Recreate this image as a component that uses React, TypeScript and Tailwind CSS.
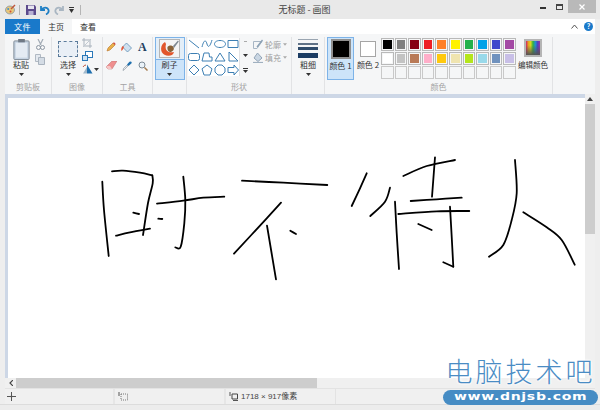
import React from "react";

const CJK = "font-['Noto_Sans_CJK_SC','Noto_Sans',sans-serif]";

const ROW_1 = ["#000000", "#7f7f7f", "#880015", "#ed1c24", "#ff7f27", "#fff200", "#22b14c", "#00a2e8", "#3f48cc", "#a349a4"];
const ROW_2 = ["#ffffff", "#c3c3c3", "#b97a57", "#ffaec9", "#ffc90e", "#efe4b0", "#b5e61d", "#99d9ea", "#7092be", "#c8bfe7"];

// hand drawn strokes on the canvas, in page coordinates
const STROKES: number[][][] = [
  [[102.3, 181.7], [104, 210], [108.7, 256]],
  [[112, 171.3], [123, 170.7], [140, 172.7], [152.3, 175.3]],
  [[152.3, 175.3], [152.7, 183.3], [148, 203], [143, 235]],
  [[116, 235.7], [130, 232.3], [150, 228.7]],
  [[133.3, 212.7], [139, 214]],
  [[158.3, 218.7], [162.3, 219]],
  [[157, 203.7], [183.3, 200.7], [203.3, 197.7], [224.3, 196.7]],
  [[183.3, 176.7], [185.3, 200], [184.3, 223.3], [180.7, 246.7], [175.3, 247.3]],
  [[242, 180.7], [283.3, 182.7], [327.3, 185]],
  [[281, 202.7], [266.7, 218.3], [234, 253.7]],
  [[267, 225.7], [276, 279.3]],
  [[290.3, 230.7], [296, 234]],
  [[366.7, 173.3], [360, 188.3], [351.7, 206]],
  [[390, 187.7], [385, 201.7], [370.3, 216]],
  [[395, 201.7], [396.7, 233.3], [399, 269]],
  [[398.3, 214], [436.7, 211.3], [469.3, 211]],
  [[450, 206.7], [451.7, 236.7], [453.3, 266.7]],
  [[453.3, 266.7], [443.3, 262.3]],
  [[418.3, 224], [431.7, 230]],
  [[410.7, 201], [436.7, 199.3], [461.7, 197.7]],
  [[435, 157.3], [432, 196.7]],
  [[403.3, 176], [426.7, 166], [455, 160]],
  [[515, 160], [516.7, 193.3], [511.7, 220], [503.3, 245], [489, 256.7]],
  [[523.3, 212.3], [546.7, 227.3], [561.7, 240], [574.7, 264.7]],
];

// catmull-rom through the sampled points, so the pen lines stay round
const smooth = (pts: number[][]) => {
  let d = `M${pts[0][0]} ${pts[0][1]}`;
  for (let i = 0; i < pts.length - 1; i++) {
    const p0 = pts[Math.max(i - 1, 0)];
    const p1 = pts[i];
    const p2 = pts[i + 1];
    const p3 = pts[Math.min(i + 2, pts.length - 1)];
    const c1x = p1[0] + (p2[0] - p0[0]) / 6;
    const c1y = p1[1] + (p2[1] - p0[1]) / 6;
    const c2x = p2[0] - (p3[0] - p1[0]) / 6;
    const c2y = p2[1] - (p3[1] - p1[1]) / 6;
    d += ` C${c1x} ${c1y} ${c2x} ${c2y} ${p2[0]} ${p2[1]}`;
  }
  return d;
};

const Arrow = () => (
  <svg width="5" height="3" viewBox="0 0 5 3" className="block">
    <path d="M0 0h5L2.5 3z" fill="#333" />
  </svg>
);

const Group = ({ label, width, children }: { label: string; width: string; children: React.ReactNode }) => (
  <div className={`${width} flex h-full flex-col border-r border-[#e2e3e5]`}>
    <div className="flex h-[44px] flex-1 items-start">{children}</div>
    <div className="mb-[1px] h-[12px] text-center text-[8px] leading-[12px] text-[#a3a3a3]">{label}</div>
  </div>
);

const Shape = ({ d }: { d: string }) => (
  <svg width="12" height="12" viewBox="0 0 12 12">
    <path d={d} fill="none" stroke="#3d7fb3" strokeWidth="1" />
  </svg>
);

const SHAPES = [
  "M1 2 L11 10",
  "M1 9 C3 1 5 2 6 6 S9 9 11 2",
  "M6 2.5 C2 2.5 .5 4.5 .5 6 S2 9.5 6 9.5 S11.5 7.500 11.5 6 S10 2.5 6 2.5z",
  "M1 2.500h10v7H1z",
  "M2.500 2.500h7q2 0 2 2v3q0 2-2 2h-7q-2 0-2-2v-3q0-2 2-2z",
  "M1 10 L3 2 H8 L8.500 6 H11 V10z",
  "M6 2 L11 10 H1z",
  "M2 1 L11 10 H2z",
  "M6 1 L11 6 L6 11 L1 6z",
  "M6 1 L11 4.800 L9 11 H3 L1 4.800z",
  "M4 1 H8 L11 4 V8 L8 11 H4 L1 8 V4z",
  "M1 3.500 H7 V1 L11.500 6 L7 11 V8.500 H1z",
];

export default function App() {
  return (
    <div className={`${CJK} relative flex h-[410px] w-[600px] flex-col overflow-hidden bg-[#eeeeee] text-[#333]`}>
      {/* title bar */}
      <div className="flex h-[19px] items-start bg-[#e9e9e9] pl-[5px]">
        <div className="flex h-[19px] w-[80px] items-center">
          <svg width="11" height="11" viewBox="0 0 11 11">
            <ellipse cx="5" cy="6" rx="4.500" ry="4" fill="#e8c77a" stroke="#7a8a9c" strokeWidth=".7" />
            <circle cx="3.200" cy="5" r="1" fill="#3c8fd0" />
            <circle cx="5.500" cy="7.500" r="1" fill="#d24a3a" />
            <path d="M6 5 L10 1" stroke="#c0563c" strokeWidth="1.500" />
          </svg>
          <div className="ml-[3px] h-[10px] w-px bg-[#b5b5b5]" />
          <svg className="ml-[6px]" width="10" height="10" viewBox="0 0 10 10">
            <path d="M0 0h8.500L10 1.500V10H0z" fill="#5c4a8c" />
            <path d="M2 .5h6v3.500H2z" fill="#e6e4ef" />
            <path d="M2.500 6h5v4h-5z" fill="#b9b2d4" />
          </svg>
          <svg className="ml-[4px]" width="10" height="10" viewBox="0 0 10 10">
            <path d="M1 1v4h4M1.500 4.800C3 2 7.500 2 8.500 5c.6 2-.5 3.500-2.500 4.500" fill="none" stroke="#1f7fc4" strokeWidth="1.800" />
          </svg>
          <svg className="ml-[4px]" width="10" height="10" viewBox="0 0 10 10">
            <path d="M9 1v4H5M8.500 4.800C7 2 2.500 2 1.500 5c-.6 2 .5 3.500 2.500 4.500" fill="none" stroke="#a9b6c2" strokeWidth="1.800" />
          </svg>
          <svg className="ml-[5px]" width="5" height="6" viewBox="0 0 5 6">
            <path d="M0 0h5v1H0zM0 2h5L2.500 6z" fill="#333" />
          </svg>
          <div className="ml-[6px] h-[10px] w-px bg-[#b5b5b5]" />
        </div>
        <div className="flex-1 pr-[16px] pt-[1px] text-center text-[9px] leading-[18px] text-[#444]">无标题 - 画图</div>
        <div className="mr-[4px] flex h-[13px] items-center">
          <div className="mr-[10px] mt-[2px] h-[2px] w-[6px] bg-[#333]" />
          <div className="mr-[5px] h-[6px] w-[7px] border border-t-2 border-[#444]" />
          <div className="flex h-[13px] w-[28px] items-center justify-center bg-[#b9b9b9]">
            <svg width="6" height="6" viewBox="0 0 6 6">
              <path d="M.5 .5l5 5M5.500 .5l-5 5" stroke="#fff" strokeWidth="1.200" />
            </svg>
          </div>
        </div>
      </div>

      {/* tabs */}
      <div className="mx-[5px] flex h-[15px] items-stretch bg-white text-[8px] leading-[15px]">
        <div className="w-[35px] bg-[#1979ca] text-center tracking-[.5px] text-white">文件</div>
        <div className="w-[32px] bg-[#f5f6f7] text-center">主页</div>
        <div className="w-[32px] text-center">查看</div>
        <div className="flex flex-1 items-center justify-end pr-[2px]">
          <svg width="7" height="5" viewBox="0 0 7 5" className="mr-[6px]">
            <path d="M.5 4.500L3.500 1l3 3.500" fill="none" stroke="#555" />
          </svg>
          <div className="flex h-[9px] w-[9px] items-center justify-center rounded-full bg-[#1979ca] text-[7px] font-bold leading-none text-white">?</div>
        </div>
      </div>

      {/* ribbon */}
      <div className="mx-[5px] flex h-[60px] items-stretch bg-[#f5f6f7] pt-[3px]">
        <Group label="剪贴板" width="w-[47px]">
          <div className="ml-[6px] flex w-[20px] flex-col items-center">
            <svg width="17" height="21" viewBox="0 0 17 22" className="mt-[2px]">
              <rect x=".5" y="2" width="16" height="19.500" rx="1" fill="#c6d3e2" stroke="#7f8a96" />
              <rect x="2.500" y="4" width="12" height="15.500" fill="#e4ebf3" />
              <rect x="5" y="0" width="7" height="3.500" fill="#707a86" />
            </svg>
            <div className="text-[8px] leading-[10px]">粘贴</div>
            <div className="mt-[3px]"><Arrow /></div>
          </div>
          <div className="ml-[4px] mt-[2px] flex flex-col items-center gap-[4px]">
            <svg width="9" height="11" viewBox="0 0 9 11">
              <path d="M2 0l3 6M7 0L4 6" stroke="#a3acb6" strokeWidth="1.200" />
              <circle cx="2.500" cy="8.500" r="2" fill="none" stroke="#8c97a3" />
              <circle cx="6.500" cy="8.500" r="2" fill="none" stroke="#8c97a3" />
            </svg>
            <svg width="10" height="11" viewBox="0 0 10 11">
              <path d="M.5 .5h5v7h-5z" fill="#e4e9ef" stroke="#b0b9c3" />
              <path d="M3.500 3.500h6v7h-6z" fill="#d4dce5" stroke="#a9b3be" />
            </svg>
          </div>
        </Group>

        <Group label="图像" width="w-[51px]">
          <div className="ml-[6px] flex w-[20px] flex-col items-center">
            <div className="mt-[4px] h-[16px] w-[20px] border border-dashed border-[#5a7a9a] bg-[#e9eff6]" />
            <div className="mt-[3px] text-[8px] leading-[10px]">选择</div>
            <div className="mt-[3px]"><Arrow /></div>
          </div>
          <div className="ml-[4px] mt-[1px] flex flex-col gap-[3px]">
            <svg width="11" height="10" viewBox="0 0 11 10">
              <path d="M2 0v8h8M0 2h8v8" fill="none" stroke="#aab3bd" strokeWidth="1" />
              <path d="M1 9l8-8" stroke="#c3cad2" />
            </svg>
            <svg width="11" height="10" viewBox="0 0 11 10">
              <rect x="3.500" y=".5" width="7" height="6" fill="#fff" stroke="#2a78b8" />
              <rect x=".5" y="4.500" width="5" height="5" fill="#cfe2f2" stroke="#2a78b8" />
            </svg>
            <div className="flex items-center gap-[1px]">
              <svg width="11" height="10" viewBox="0 0 11 10">
                <path d="M5 .5L10.500 9.500H5z" fill="#1e6fae" />
                <path d="M5 3L1 9.500h4z" fill="#9fb8cc" />
                <path d="M1 3q1-2 3-2" fill="none" stroke="#c0563c" />
              </svg>
              <Arrow />
            </div>
          </div>
        </Group>

        <Group label="工具" width="w-[50px]">
          <div className="ml-[3px] mt-[5px] grid grid-cols-3 gap-x-[5px] gap-y-[8px]">
            <svg width="10" height="10" viewBox="0 0 10 10">
              <path d="M1 9l1-3 5-5 2 2-5 5z" fill="#e8b04a" stroke="#b8742a" strokeWidth=".6" />
              <path d="M7 1l2 2 .7-.9L8 .2z" fill="#d2453a" />
            </svg>
            <svg width="11" height="11" viewBox="0 0 11 11" className="-ml-[1px]">
              <path d="M5.500 1l5 5-4 4-5-5z" fill="#cfe0ef" stroke="#5f8fb5" strokeWidth=".8" />
              <path d="M2 4C0 5 0 8 .5 9 2 8 2.500 6 3 5z" fill="#e2583a" />
            </svg>
            <div className="font-['Liberation_Serif',serif] text-[12px] font-bold leading-[10px] text-[#23405f]">A</div>
            <svg width="11" height="9" viewBox="0 0 11 9">
              <path d="M0 6l6-6h5L6 8H2z" fill="#ef8f8f" stroke="#b96a6a" strokeWidth=".5" />
              <path d="M0 6l2 2h4L4 5H1z" fill="#f6c6c6" />
            </svg>
            <svg width="10" height="10" viewBox="0 0 10 10">
              <path d="M1 9.500l.5-2L5 4l1 1-3.500 3.500z" fill="#e5e9ee" stroke="#6e7a86" strokeWidth=".5" />
              <path d="M5 3.500L7.500.800q1-.8 1.800 0t0 1.800L6.500 5z" fill="#1f6fae" />
            </svg>
            <svg width="10" height="10" viewBox="0 0 10 10">
              <circle cx="4" cy="4" r="3" fill="#eaf2f8" stroke="#7d8a96" />
              <path d="M6.500 6.500L9.500 9.500" stroke="#a27a4e" strokeWidth="1.500" />
            </svg>
          </div>
        </Group>

        <div className="flex w-[34px] items-start justify-center border-r border-[#e2e3e5]">
          <div className="flex h-[43px] w-[30px] flex-col items-center border border-[#7db3e8] bg-[#cde4f9]">
            <div className="flex h-[22px] w-full items-center justify-center border-b border-[#7db3e8] bg-[#e3eef8]">
              <svg width="21" height="19" viewBox="0 0 21 19">
                <rect x=".5" y=".5" width="20" height="18" fill="#f4f4f4" stroke="#b5b5b5" />
                <path d="M6 3C1 6 1 13 5 15.500 9 18 14 17 15 13 11 14 5 13 7 5z" fill="#e2562c" />
                <path d="M8.500 8C10 6 13 6 14.500 8 15.500 10 14.500 12 12 13 9.500 13 8 11 8.500 8z" fill="#8a6238" />
                <path d="M14 7L19 1.500 19.800 2.500 15 9z" fill="#7d8790" />
              </svg>
            </div>
            <div className="text-[8px] leading-[10px]">刷子</div>
            <div className="mt-[3px]"><Arrow /></div>
          </div>
        </div>

        <Group label="形状" width="w-[105px]">
          <div className="ml-[1px] mt-[1px] flex h-[38px] w-[62px] bg-white">
            <div className="grid w-[51px] grid-cols-4 place-items-center">
              {SHAPES.map((d, i) => (
                <Shape key={i} d={d} />
              ))}
            </div>
            <div className="flex w-[11px] flex-col items-center justify-between border-l border-[#e2e3e5] bg-[#f5f6f7] py-[3px]">
              <div className="h-px w-[3px] bg-[#aaa]" />
              <Arrow />
              <div className="flex flex-col items-center gap-px">
                <div className="h-px w-[5px] bg-[#333]" />
                <Arrow />
              </div>
            </div>
          </div>
          <div className="ml-[3px] mt-[2px] flex flex-col gap-[2px] text-[8px] leading-[11px] text-[#a0a0a0]">
            <div className="flex items-center gap-[2px]">
              <svg width="10" height="11" viewBox="0 0 10 11">
                <path d="M.5 2.500h8.500L4 9.500H.5z" fill="none" stroke="#a8b6c4" />
                <path d="M9.500 1L4 8" stroke="#8aa0b4" strokeWidth="1.300" />
              </svg>
              <span>轮廓</span>
              <svg width="4" height="3" viewBox="0 0 5 3"><path d="M0 0h5L2.500 3z" fill="#aaa" /></svg>
            </div>
            <div className="flex items-center gap-[2px]">
              <svg width="10" height="11" viewBox="0 0 10 11">
                <path d="M4.500 1L9 6 5 9.500 1 6z" fill="#c9d6e3" stroke="#93a5b7" />
                <path d="M0 10.500h10" stroke="#9fb0c0" strokeWidth="1.200" />
              </svg>
              <span>填充</span>
              <svg width="4" height="3" viewBox="0 0 5 3"><path d="M0 0h5L2.500 3z" fill="#aaa" /></svg>
            </div>
          </div>
        </Group>

        <div className="flex h-full w-[33px] flex-col items-center border-r border-[#e2e3e5] pt-[2px]">
          <div className="flex w-[20px] flex-col">
            <div className="h-px bg-[#9aa5b1]" />
            <div className="mt-[3px] h-[2px] bg-[#5f7186]" />
            <div className="mt-[2px] h-[3px] bg-[#2f4b6b]" />
            <div className="mt-[3px] h-[5px] bg-[#1b3c63]" />
          </div>
          <div className="mt-[2px] text-[8px] leading-[10px]">粗细</div>
          <div className="mt-[3px]"><Arrow /></div>
        </div>

        <Group label="颜色" width="w-[228px]">
          <div className="ml-[2px] flex h-[43px] w-[27px] flex-col items-center border border-[#7db3e8] bg-[#cde4f9]">
            <div className="mt-[1px] h-[20px] w-[20px] border-2 border-[#8f8f8f] bg-black" />
            <div className="mt-[1px] whitespace-nowrap text-[8px] leading-[12px]">颜色 1</div>
          </div>
          <div className="ml-[2px] flex w-[24px] flex-col items-center">
            <div className="mt-[4px] h-[16px] w-[16px] border border-[#a5a5a5] bg-white" />
            <div className="mt-[2px] whitespace-nowrap text-[8px] leading-[12px]">颜色 2</div>
          </div>
          <div className="ml-[1px] mt-[1px] grid w-[135px] grid-cols-10 gap-[1px]">
            {ROW_1.map((c) => (
              <div key={c} className="h-[13px] border border-[#b9b9b9] p-px">
                <div className="h-full w-full" style={{ backgroundColor: c }} />
              </div>
            ))}
            {ROW_2.map((c) => (
              <div key={c} className="h-[13px] border border-[#b9b9b9] p-px">
                <div className="h-full w-full" style={{ backgroundColor: c }} />
              </div>
            ))}
            {ROW_1.map((c) => (
              <div key={c} className="h-[13px] border border-[#c9c9c9] bg-[#f5f6f7]" />
            ))}
          </div>
          <div className="ml-[2px] flex w-[30px] flex-col items-center">
            <div className="mt-[2px] h-[18px] w-[18px] border-2 border-[#b5b5b5] bg-[linear-gradient(90deg,#d0206a,#e8a020,#d8d820,#30b040,#2090d0,#5040c0,#a030a0)]">
              <div className="h-full w-full bg-[linear-gradient(180deg,transparent_30%,#555)]" />
            </div>
            <div className="mt-[2px] whitespace-nowrap text-[7.500px] leading-[12px]">编辑颜色</div>
          </div>
        </Group>
        <div className="flex-1" />
      </div>

      {/* workspace */}
      <div className="mx-[5px] flex h-[284px] flex-row">
        <div className="flex flex-1 flex-col bg-[#cdd7e6] pl-[3px] pt-[4px]">
          <div className="relative flex-1 bg-white" />
        </div>
        <div className="flex w-[10px] flex-col bg-[#f0f0f0]">
          <div className="flex h-[10px] items-center justify-center">
            <svg width="6" height="4" viewBox="0 0 6 4"><path d="M0 4l3-4 3 4z" fill="#444" /></svg>
          </div>
          <div className="h-[130px] bg-[#cdcdcd]" />
        </div>
      </div>

      {/* horizontal scrollbar */}
      <div className="mx-[5px] flex h-[10px] bg-[#f0f0f0]">
        <div className="flex w-[11px] items-center justify-center">
          <svg width="4" height="6" viewBox="0 0 4 6"><path d="M4 0L1 3l3 3" fill="none" stroke="#444" strokeWidth="1.200" /></svg>
        </div>
        <div className="w-[301px] bg-[#cdcdcd]" />
      </div>

      {/* status bar */}
      <div className="mx-[5px] flex h-[16px] items-center border-t border-[#e3e3e3] bg-[#f0f0f0] text-[8px]">
        <div className="flex h-full w-[110px] items-center border-r-2 border-[#e6e6e6] pl-[2px]">
          <svg width="9" height="9" viewBox="0 0 9 9"><path d="M4.500 0v9M0 4.500h9" stroke="#555" /><circle cx="4.500" cy="4.500" r="1" fill="#555" /></svg>
        </div>
        <div className="flex h-full w-[111px] items-center border-r-2 border-[#e6e6e6] pl-[3px]">
          <svg width="10" height="9" viewBox="0 0 10 9"><path d="M3 2h6.500v6H3z" fill="none" stroke="#777" strokeDasharray="1 1" /><path d="M1 0v4" stroke="#555" /></svg>
        </div>
        <div className="flex h-full w-[110px] items-center gap-[3px] border-r border-[#e3e3e3] pl-[3px] font-['Liberation_Sans','Noto_Sans_CJK_SC',sans-serif] text-[#444]">
          <svg width="9" height="9" viewBox="0 0 9 9"><path d="M3 2h5.500v5H3z" fill="none" stroke="#444" /><path d="M1 0v4M4 8.500h5" stroke="#555" /></svg>
          <span className="whitespace-nowrap">1718 × 917像素</span>
        </div>
      </div>
      <div className="flex-1 border-t border-[#dcdcdc] bg-[#ececec]" />

      {/* the drawing sits on the canvas */}
      <svg className="pointer-events-none absolute left-0 top-0" width="600" height="410" viewBox="0 0 600 410">
        {STROKES.map((pts, i) => (
          <path key={i} d={smooth(pts)} fill="none" stroke="#000" strokeWidth="1.800" strokeLinecap="round" strokeLinejoin="round" />
        ))}
      </svg>

      {/* site watermark */}
      <div className="absolute left-[443px] top-[354px] flex w-[155px] flex-col items-center">
        <div className="whitespace-nowrap text-[27px] font-light leading-[34px] tracking-[3px] text-[#4a8cc4] [text-shadow:0_0_3px_#fff,0_0_3px_#fff,0_0_3px_#fff]">电脑技术吧</div>
        <div className="mt-[2px] h-[15px] w-[155px] rounded-full bg-[#468cc4] text-center font-['DejaVu_Sans',sans-serif] text-[10px] font-bold leading-[14px] text-white">
          <span className="inline-block scale-x-[1.4] tracking-[.5px]">www.dnjsb.com</span>
        </div>
      </div>
    </div>
  );
}
